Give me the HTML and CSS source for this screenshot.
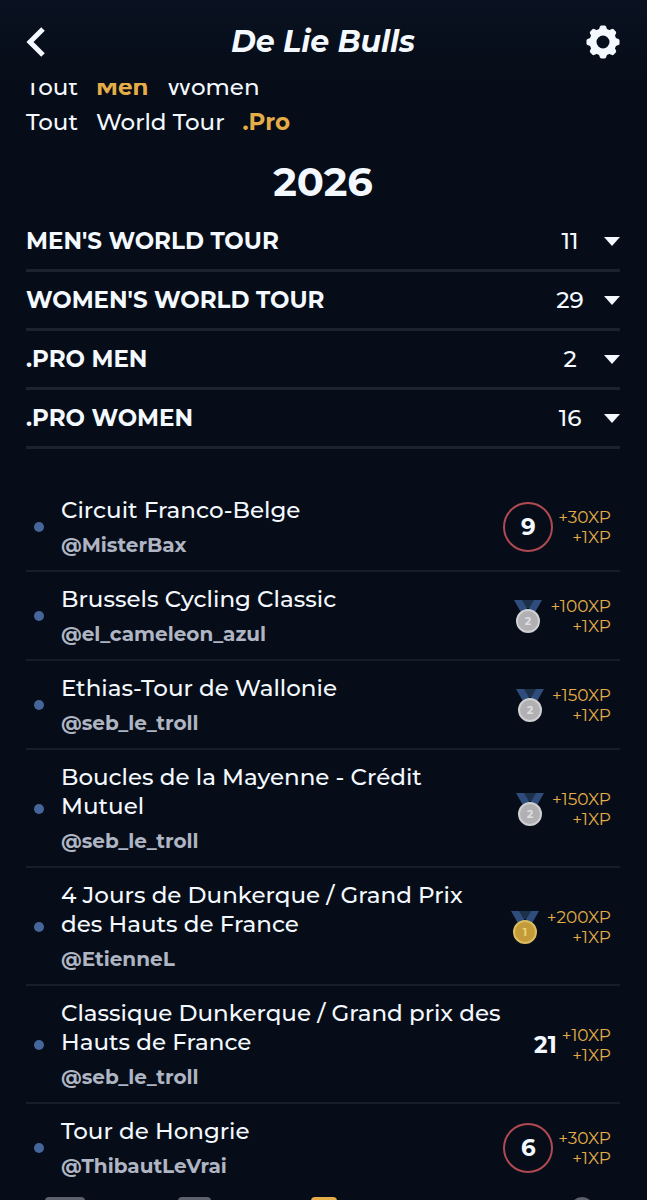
FILE: index.html
```html
<!DOCTYPE html>
<html lang="fr">
  <head>
    <meta charset="utf-8" />
    <meta name="viewport" content="width=device-width, initial-scale=1.0" />
    <title>De Lie Bulls</title>
    <link rel="stylesheet" href="styles.css">
  </head>
  <body>
    <!-- shared drawings -->
    <svg class="sprite" aria-hidden="true">
      <symbol id="medal" viewBox="0 0 28 34">
        <path class="ribbon-back" d="M8 1h12l-3 8h-6z" />
        <path class="ribbon" d="M0 1h8l7 12-7 2zM28 1h-8l-7 12 7 2z" />
        <circle class="medal-disc" cx="14" cy="22" r="11" />
      </symbol>
    </svg>

    <header class="topbar">
      <button class="icon-button" aria-label="Retour">
        <svg width="20" height="32" viewBox="0 0 20 32">
          <path class="chevron" d="M17 3 4 16l13 13" />
        </svg>
      </button>
      <h1>De Lie Bulls</h1>
      <button class="icon-button" aria-label="Paramètres">
        <svg width="34" height="34" viewBox="0 0 34 34">
          <g class="gear">
            <path id="tooth" d="M12.500 5.500 14 1.500Q14.500 0.500 15.500 0.500H18.500Q19.500 0.500 20 1.500L21.500 5.500z" />
            <use href="#tooth" transform="rotate(45 17 17)" />
            <use href="#tooth" transform="rotate(90 17 17)" />
            <use href="#tooth" transform="rotate(135 17 17)" />
            <use href="#tooth" transform="rotate(180 17 17)" />
            <use href="#tooth" transform="rotate(225 17 17)" />
            <use href="#tooth" transform="rotate(270 17 17)" />
            <use href="#tooth" transform="rotate(315 17 17)" />
          </g>
          <circle class="gear-ring" cx="17" cy="17" r="10" />
        </svg>
      </button>
    </header>

    <main>
      <div class="filters">
        <div class="filter-row">
          <button>Tout</button>
          <button class="active">Men</button>
          <button>Women</button>
        </div>
        <div class="filter-row">
          <button>Tout</button>
          <button>World Tour</button>
          <button class="active">.Pro</button>
        </div>
      </div>

      <h2>2026</h2>

      <div class="groups">
        <button class="group">
          <span class="group-name">Men's World Tour</span>
          <span class="count">11</span>
          <span class="caret"></span>
        </button>
        <button class="group">
          <span class="group-name">Women's World Tour</span>
          <span class="count">29</span>
          <span class="caret"></span>
        </button>
        <button class="group">
          <span class="group-name">.Pro Men</span>
          <span class="count">2</span>
          <span class="caret"></span>
        </button>
        <button class="group">
          <span class="group-name">.Pro Women</span>
          <span class="count">16</span>
          <span class="caret"></span>
        </button>
      </div>

      <ul class="races">
        <li class="race">
          <span class="dot"></span>
          <div class="info">
            <p class="name">Circuit Franco-Belge</p>
            <p class="player">@MisterBax</p>
          </div>
          <span class="rank top10">9</span>
          <p class="xp">+30XP<br />+1XP</p>
        </li>
        <li class="race">
          <span class="dot"></span>
          <div class="info">
            <p class="name">Brussels Cycling Classic</p>
            <p class="player">@el_cameleon_azul</p>
          </div>
          <svg class="medal silver" viewBox="0 0 28 34"><use href="#medal" /><text x="14" y="26">2</text></svg>
          <p class="xp">+100XP<br />+1XP</p>
        </li>
        <li class="race">
          <span class="dot"></span>
          <div class="info">
            <p class="name">Ethias-Tour de Wallonie</p>
            <p class="player">@seb_le_troll</p>
          </div>
          <svg class="medal silver" viewBox="0 0 28 34"><use href="#medal" /><text x="14" y="26">2</text></svg>
          <p class="xp">+150XP<br />+1XP</p>
        </li>
        <li class="race">
          <span class="dot"></span>
          <div class="info">
            <p class="name">Boucles de la Mayenne - Crédit Mutuel</p>
            <p class="player">@seb_le_troll</p>
          </div>
          <svg class="medal silver" viewBox="0 0 28 34"><use href="#medal" /><text x="14" y="26">2</text></svg>
          <p class="xp">+150XP<br />+1XP</p>
        </li>
        <li class="race">
          <span class="dot"></span>
          <div class="info">
            <p class="name">4 Jours de Dunkerque / Grand Prix des Hauts de France</p>
            <p class="player">@EtienneL</p>
          </div>
          <svg class="medal gold" viewBox="0 0 28 34"><use href="#medal" /><text x="14" y="26">1</text></svg>
          <p class="xp">+200XP<br />+1XP</p>
        </li>
        <li class="race">
          <span class="dot"></span>
          <div class="info">
            <p class="name">Classique Dunkerque / Grand prix des Hauts de France</p>
            <p class="player">@seb_le_troll</p>
          </div>
          <span class="rank">21</span>
          <p class="xp">+10XP<br />+1XP</p>
        </li>
        <li class="race">
          <span class="dot"></span>
          <div class="info">
            <p class="name">Tour de Hongrie</p>
            <p class="player">@ThibautLeVrai</p>
          </div>
          <span class="rank top10">6</span>
          <p class="xp">+30XP<br />+1XP</p>
        </li>
      </ul>
    </main>

    <nav class="tabbar">
      <span class="tab"><span class="tab-icon wide"></span></span>
      <span class="tab"><span class="tab-icon"></span></span>
      <span class="tab"><span class="tab-icon active"></span></span>
      <span class="tab"></span>
      <span class="tab"><span class="tab-icon round"></span></span>
    </nav>
  </body>
</html>
```

FILE: styles.css
```css
* {
  box-sizing: border-box;
}
body {
  display: flex;
  flex-direction: column;
  height: 100vh;
  margin: 0;
  overflow: hidden;
  background: #060d18;
  color: #f4f9ff;
  font-family: Montserrat, Inter, sans-serif;
  font-size: 23px;
  font-weight: 500;
}
h1,
h2,
p,
ul {
  margin: 0;
  padding: 0;
}
button {
  padding: 0;
  border: 0;
  background: none;
  color: inherit;
  font: inherit;
  cursor: pointer;
}
.sprite {
  display: none;
}

/* top bar */
.topbar {
  display: flex;
  flex: none;
  justify-content: space-between;
  align-items: center;
  height: 83px;
  padding: 0 27px 0 26px;
  background: linear-gradient(#0a1120, #060d18);
  z-index: 1;
}
.topbar h1 {
  font-size: 30px;
  font-style: italic;
  font-weight: 700;
}
.icon-button {
  display: flex;
  width: 34px;
}
.chevron {
  fill: none;
  stroke: #f4f9ff;
  stroke-width: 5;
}
.gear {
  fill: #f4f9ff;
}
.gear-ring {
  fill: none;
  stroke: #f4f9ff;
  stroke-width: 7;
}

main {
  flex: 1;
  min-height: 0;
  padding: 0 27px 0 26px;
  overflow: hidden;
}

/* filters, partly scrolled under the top bar */
.filters {
  margin-top: -14px;
}
.filter-row {
  display: flex;
  gap: 18px;
  height: 35px;
}
.filter-row .active {
  color: #e5ad48;
  font-weight: 700;
}
h2 {
  margin: 18px 0 6px;
  font-size: 40px;
  line-height: 50px;
  text-align: center;
}

/* groups */
.group {
  display: flex;
  align-items: center;
  width: 100%;
  height: 59px;
  border-bottom: 3px solid #1c222e;
}
.group-name {
  flex: 1;
  font-weight: 700;
  text-align: left;
  text-transform: uppercase;
}
.count {
  width: 40px;
  margin-right: 14px;
  text-align: center;
}
.caret {
  border: 8px solid transparent;
  border-top: 9px solid #f4f9ff;
  border-bottom: 0;
}

/* races */
.races {
  margin-top: 34px;
  list-style: none;
}
.race {
  display: flex;
  align-items: center;
  gap: 5px;
  padding: 13px 9px 12px 8px;
  border-bottom: 2px solid #171e29;
}
.race:last-child {
  border-bottom: 0;
}
.dot {
  flex: none;
  width: 10px;
  height: 10px;
  margin-right: 12px;
  border-radius: 50%;
  background: #45669a;
}
.info {
  flex: 1;
}
.name {
  line-height: 29px;
}
.player {
  margin-top: 7px;
  color: #afb5c3;
  font-size: 20px;
  font-weight: 700;
  line-height: 26px;
}
.rank {
  font-weight: 700;
}
.top10 {
  display: flex;
  flex: none;
  justify-content: center;
  align-items: center;
  width: 50px;
  height: 50px;
  border: 2px solid #b04a52;
  border-radius: 50%;
}
.xp {
  color: #e5ad48;
  font-size: 17px;
  font-weight: 400;
  line-height: 20px;
  text-align: right;
}
.medal {
  flex: none;
  width: 28px;
  height: 34px;
  margin-right: 3px;
}
.medal text {
  font-size: 11px;
  font-weight: 700;
  text-anchor: middle;
}
.ribbon {
  fill: #2f4d7c;
}
.ribbon-back {
  fill: #1c3049;
}
.medal-disc {
  stroke-width: 2;
}
.silver {
  fill: #b1b1b3;
  stroke: #d0d0d3;
}
.gold {
  fill: #c39b38;
  stroke: #dcbd60;
}
.ribbon,
.ribbon-back,
.medal text {
  stroke: none;
}
.silver text {
  fill: #dedee2;
}
.gold text {
  fill: #ecd175;
}

/* bottom tabs */
.tabbar {
  display: flex;
  flex: none;
  height: 3px;
  overflow: hidden;
}
.tab {
  display: flex;
  flex: 1;
  justify-content: center;
}
.tab-icon {
  width: 33px;
  height: 24px;
  border-radius: 4px;
  background: #5d616b;
}
.tab-icon.wide {
  width: 40px;
}
.tab-icon.round {
  width: 24px;
  border-radius: 50%;
}
.tab-icon.active {
  width: 26px;
  background: #e5ad48;
}
```
